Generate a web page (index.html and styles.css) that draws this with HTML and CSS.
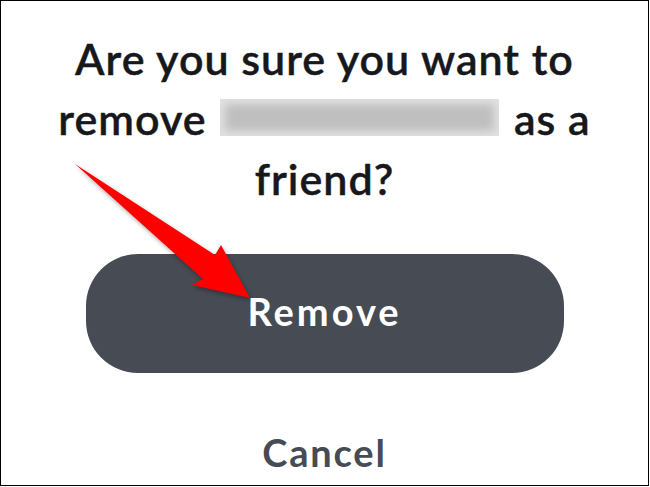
FILE: index.html
```html
<!DOCTYPE html>
<html lang="en">
<head>
<meta charset="utf-8">
<title>Remove friend</title>
<link rel="stylesheet" href="styles.css">
</head>
<body>
<div class="frame">
  <div class="dialog">
    <p class="title">Are you sure you want to<br>remove <span class="blurred" aria-label="username"></span> as a<br>friend?</p>
    <button class="btn-remove" type="button">Remove</button>
    <button class="btn-cancel" type="button">Cancel</button>
  </div>
  <svg class="arrow" width="650" height="487" viewBox="0 0 650 487" aria-hidden="true">
    <polygon points="75,164 215,255 221,245 250,298 192,285 203,279" fill="#ff0000"/>
  </svg>
</div>
</body>
</html>
```

FILE: styles.css
```css
html, body {
  margin: 0;
  padding: 0;
  background: #ffffff;
}

.frame {
  position: relative;
  box-sizing: border-box;
  width: 649px;
  height: 486px;
  border: 1px solid #000000;
  background: #ffffff;
  overflow: hidden;
}

.dialog {
  display: flex;
  flex-direction: column;
  align-items: center;
  padding-top: 28px;
  font-family: Lato, "Liberation Sans", sans-serif;
}

.title {
  margin: 0;
  font-size: 43px;
  font-weight: 600;
  line-height: 60px;
  letter-spacing: 1px;
  text-align: center;
  color: #16181c;
  white-space: nowrap;
  -webkit-text-stroke: 0.4px #16181c;
}

.blurred {
  display: inline-block;
  width: 279px;
  height: 37px;
  margin: 0 3px 0 2px;
  vertical-align: -1px;
  background: #bfbfbf;
  box-shadow: inset 0 0 8px 5px #e2e2e2;
}

.btn-remove {
  margin-top: 45px;
  width: 478px;
  height: 119px;
  padding: 0 0 6px;
  border: none;
  border-radius: 52px;
  background: #464b54;
  color: #ffffff;
  font-family: inherit;
  font-size: 38px;
  font-weight: 700;
  letter-spacing: 3px;
  cursor: pointer;
}

.btn-cancel {
  margin-top: 56px;
  padding: 0;
  border: none;
  background: none;
  color: #464b54;
  font-family: inherit;
  font-size: 38px;
  font-weight: 700;
  line-height: 46px;
  letter-spacing: 1.8px;
  cursor: pointer;
}

.arrow {
  position: absolute;
  top: -1px;
  left: -1px;
  filter: drop-shadow(1px 2px 2px rgba(0, 0, 0, 0.35));
  pointer-events: none;
}
```
